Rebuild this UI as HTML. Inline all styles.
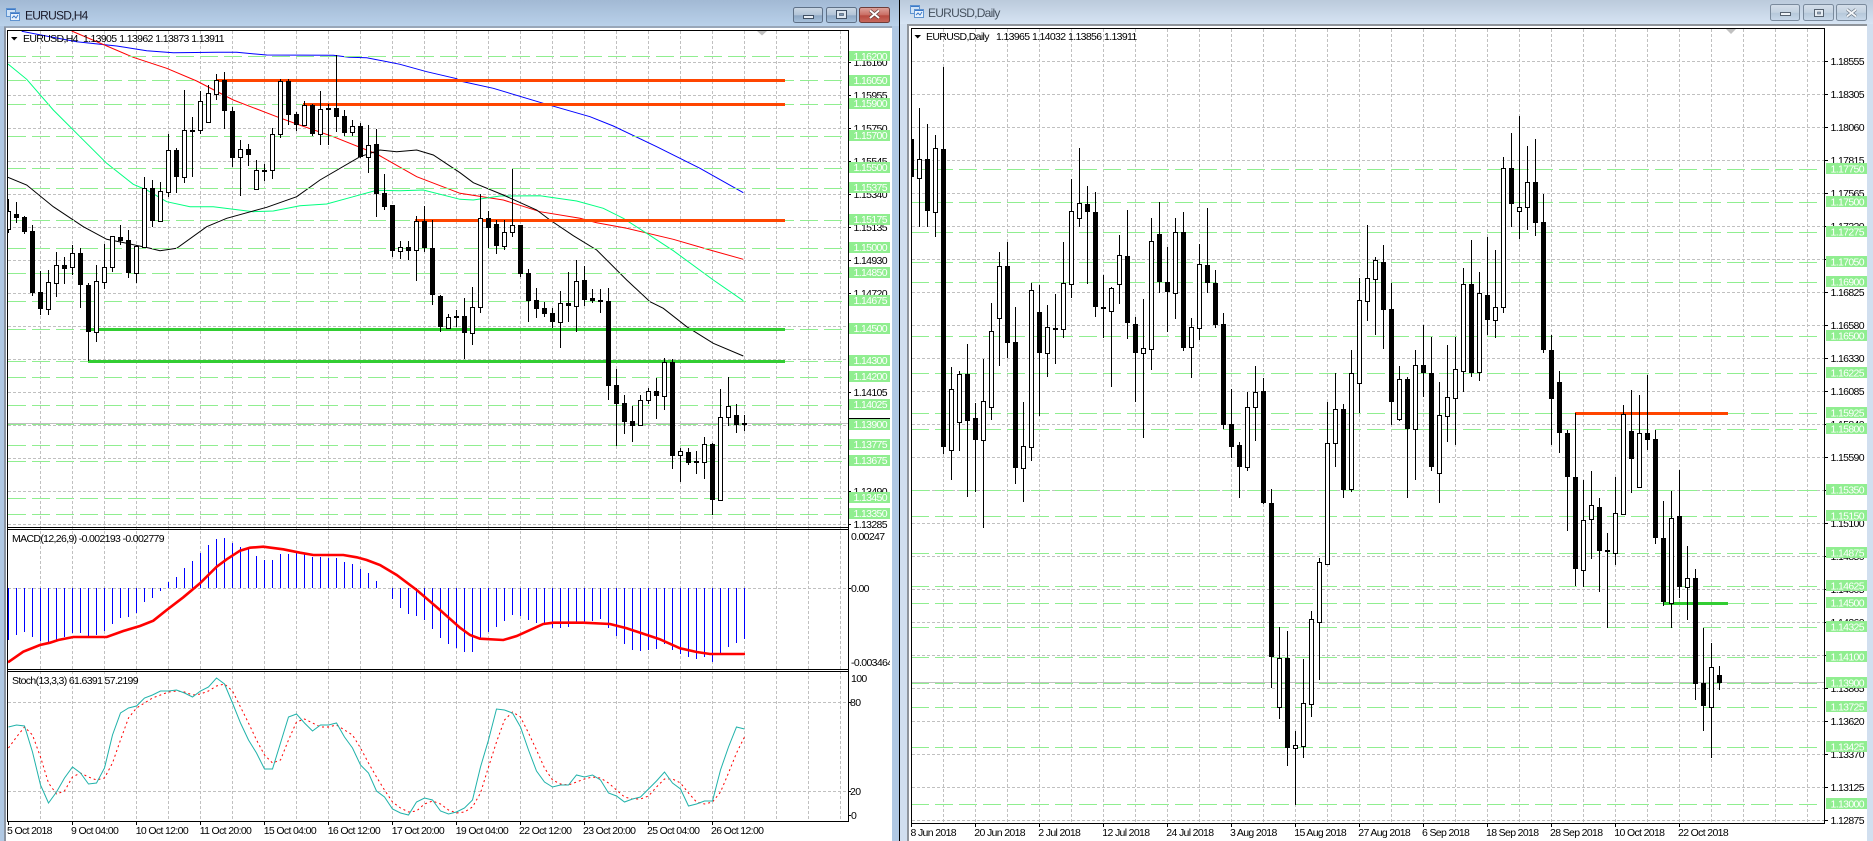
<!DOCTYPE html>
<html><head><meta charset="utf-8"><title>EURUSD</title>
<style>
html,body{margin:0;padding:0;background:#fff;width:1873px;height:841px;overflow:hidden}
svg{display:block}
text{font-family:"Liberation Sans",sans-serif;font-size:10.5px;letter-spacing:-.65px;fill:#000}
.w text{fill:#fff}
.tt{font-size:12px;letter-spacing:-.75px}
.g{stroke:#c0c0c0;stroke-dasharray:3 2;fill:none}
.d{stroke:#90ee90;stroke-dasharray:18 6;fill:none}
.lb{fill:#90ee90}
</style></head><body>
<svg width="1873" height="841" viewBox="0 0 1873 841" xmlns="http://www.w3.org/2000/svg">
<defs>
<linearGradient id="t1" x1="0" y1="0" x2="0" y2="1"><stop offset="0" stop-color="#a2b9d4"/><stop offset="1" stop-color="#b9d1ea"/></linearGradient>
<linearGradient id="t2" x1="0" y1="0" x2="0" y2="1"><stop offset="0" stop-color="#bbcadb"/><stop offset="1" stop-color="#d6e4f3"/></linearGradient>
<linearGradient id="b1" x1="0" y1="0" x2="0" y2="1"><stop offset="0" stop-color="#ccd8e5"/><stop offset=".5" stop-color="#b2c4d8"/><stop offset=".55" stop-color="#8ea8c4"/><stop offset="1" stop-color="#a9c3de"/></linearGradient>
<linearGradient id="b2" x1="0" y1="0" x2="0" y2="1"><stop offset="0" stop-color="#dfa59f"/><stop offset=".5" stop-color="#c96d63"/><stop offset=".55" stop-color="#b84a40"/><stop offset="1" stop-color="#c96a5e"/></linearGradient>
<linearGradient id="b3" x1="0" y1="0" x2="0" y2="1"><stop offset="0" stop-color="#d5dfea"/><stop offset=".5" stop-color="#c4d2e1"/><stop offset=".55" stop-color="#b6c8da"/><stop offset="1" stop-color="#c9d9ea"/></linearGradient>
<clipPath id="cL"><rect x="8" y="31" width="840" height="790"/></clipPath>
<clipPath id="cR"><rect x="912" y="29" width="912" height="794"/></clipPath>
<clipPath id="cA"><rect x="849" y="530" width="41" height="140"/></clipPath>
</defs>

<!-- left window chrome -->
<rect x="0" y="0" width="899" height="841" fill="#b0c8e3"/>
<rect x="0" y="0" width="899" height="26" fill="url(#t1)"/>
<rect x="4" y="26" width="888" height="2" fill="#98a7b9"/>
<rect x="4" y="27" width="2" height="814" fill="#8a94a2"/>
<rect x="6" y="28" width="886" height="813" fill="#fff"/>
<rect x="899" y="0" width="1" height="841" fill="#000"/>
<!-- right window chrome -->
<rect x="900" y="0" width="973" height="841" fill="#d1dfef"/>
<rect x="900" y="0" width="973" height="24" fill="url(#t2)"/>
<rect x="907" y="24" width="960" height="2" fill="#8f959c"/>
<rect x="907" y="26" width="2" height="815" fill="#8f959c"/>
<rect x="909" y="26" width="958" height="815" fill="#fff"/>

<!-- icons -->
<g>
<rect x="6.5" y="8.5" width="9" height="8" fill="#cfe2f6" stroke="#5f93d0"/><rect x="10.5" y="12.5" width="9" height="8" fill="#e8f2fc" stroke="#5f93d0"/><path d="M7 9.5h8M11 13.5h8" stroke="#3b78c8"/><path d="M12 18l2-2 2 2 2-3" stroke="#3b78c8" fill="none"/>
<rect x="910.5" y="5.5" width="9" height="8" fill="#cfe2f6" stroke="#5f93d0"/><rect x="914.5" y="9.5" width="9" height="8" fill="#e8f2fc" stroke="#5f93d0"/><path d="M911 6.5h8M915 10.5h8" stroke="#3b78c8"/><path d="M916 15l2-2 2 2 2-3" stroke="#3b78c8" fill="none"/>
</g>
<text class="tt" x="25" y="19.5" fill="#1a1a2a" style="fill:#1a1a2a">EURUSD,H4</text>
<text class="tt" x="928" y="17" style="fill:#46525f">EURUSD,Daily</text>

<!-- buttons left -->
<rect x="793.5" y="7.5" width="29" height="15" rx="2" fill="url(#b1)" stroke="#5f7187"/>
<rect x="826.5" y="7.5" width="30" height="15" rx="2" fill="url(#b1)" stroke="#5f7187"/>
<rect x="859.5" y="7.5" width="30" height="15" rx="2" fill="url(#b2)" stroke="#6e3d3a"/>
<rect x="803.5" y="15.5" width="10" height="3" fill="#e8eef5" stroke="#3f4f63"/>
<rect x="836.5" y="10.5" width="10" height="8" fill="#dfe7f0" stroke="#3f4f63"/><rect x="839.5" y="13.5" width="4" height="2" fill="#7f99b6" stroke="#3f4f63" stroke-width=".6"/>
<path d="M870 10.5l9 7.5M879 10.5l-9 7.5" stroke="#5a3835" stroke-width="3.4"/><path d="M870 10.5l9 7.5M879 10.5l-9 7.5" stroke="#fff" stroke-width="2"/>
<!-- buttons right -->
<rect x="1770.5" y="4.5" width="29" height="16" rx="2" fill="url(#b3)" stroke="#7a8a9c"/>
<rect x="1803.5" y="4.5" width="30" height="16" rx="2" fill="url(#b3)" stroke="#7a8a9c"/>
<rect x="1836.5" y="4.5" width="30" height="16" rx="2" fill="url(#b3)" stroke="#7a8a9c"/>
<rect x="1780.5" y="12.5" width="10" height="3" fill="#eef3f8" stroke="#55616f"/>
<rect x="1814.5" y="9.5" width="9" height="7" fill="#e6edf4" stroke="#55616f"/><rect x="1817.5" y="12" width="3" height="2" fill="#9cb0c6" stroke="#55616f" stroke-width=".6"/>
<path d="M1847 9.5l9 7M1856 9.5l-9 7" stroke="#6a7582" stroke-width="3.2"/><path d="M1847 9.5l9 7M1856 9.5l-9 7" stroke="#f4f7fa" stroke-width="1.8"/>

<!-- LEFT grid -->
<path class="g" d="M8 62.5H848M8 95.5H848M8 128.5H848M8 161.5H848M8 194.5H848M8 227.5H848M8 260.5H848M8 293.5H848M8 326.5H848M8 359.5H848M8 392.5H848M8 425.5H848M8 458.5H848M8 491.5H848M8 524.5H848M8 588.5H848M8 702.5H848M8 791.5H848"/>
<path class="g" d="M40.5 31V821M72.5 31V821M104.5 31V821M136.5 31V821M168.5 31V821M200.5 31V821M232.5 31V821M264.5 31V821M296.5 31V821M328.5 31V821M360.5 31V821M392.5 31V821M424.5 31V821M456.5 31V821M488.5 31V821M520.5 31V821M552.5 31V821M584.5 31V821M616.5 31V821M648.5 31V821M680.5 31V821M712.5 31V821M744.5 31V821M776.5 31V821M808.5 31V821M840.5 31V821"/>

<g clip-path="url(#cL)" fill="none">
<!-- MAs -->
<path stroke="#00f" d="M21.7 31.3 50 36.7 76.7 41.7 116.7 46 146.7 50.7 173.3 52.7 216.7 52.3 236.7 52.3 266.7 55 333.3 55.3 349 57.3 366.7 57.7 400 64.3 426.7 71.7 456.7 78.7 460 81 493.3 88.3 543.3 103.3 590 116.7 613.3 126 656.7 146.7 700 168.3 743.3 192.7"/>
<path stroke="#f00" d="M71.7 31 133.3 57.3 166.7 68.3 196.7 81 233.3 100 276.7 116.7 296.7 124 333.3 136.7 376.7 154 416.7 176.7 460 193.3 503.3 200 540 211.7 580 218.3 596.7 222.7 626.7 228.3 673.3 239.3 710 250 743.3 259.3"/>
<path stroke="#00ff7f" d="M8 64 26.7 79.3 53.3 110 80 136.7 106.7 163.3 133.3 184.3 146.7 190 166.7 201.7 190 206.7 213.3 206.7 253.3 211.7 273.3 211 300 205.7 326.7 204 353.3 196.7 376.7 190.3 400 190.7 423.3 190 460 199.3 473.3 200 500 196 540 195.7 576.7 201 603.3 208.3 623.3 218.3 646.7 233.3 673.3 250.7 713.3 280 743.3 300.7"/>
<path stroke="#000" d="M8 177.3 26.7 185 53.3 206.7 83.3 226.7 106.7 239.3 126.7 243.3 150 248.3 160 250.7 176.7 248.3 206.7 226.7 226.7 218.3 266.7 207.3 296.7 196.7 320 180 360 156.7 380 150 396.7 151.7 416.7 150 433.3 155 460 172.7 473.3 182.7 503.3 195 536.7 210 550 220 573.3 235.7 596.7 250 626.7 280 650 301.7 663.3 308.3 686.7 326.7 713.3 343.3 743.3 356"/>
<!-- level dashes -->
<path class="d" d="M8 56.5H842M8 80.5H842M8 104.5H842M8 136.5H842M8 168.5H842M8 188.5H842M8 220.5H842M8 248.5H842M8 273.5H842M8 301.5H842M8 329.5H842M8 361.5H842M8 377.5H842M8 405.5H842M8 424.5H842M8 445.5H842M8 461.5H842M8 498.5H842M8 514.5H842"/>
<path stroke="#c0c0c0" d="M8 423.5H848"/>
<!-- thick objects -->
<path stroke="#ff4500" stroke-width="3" d="M217 80.5H785M303 104.5H785M415 220.5H785"/>
<path stroke="#32cd32" stroke-width="3" d="M91 329.5H785M88 361.5H785"/>
<!-- candles -->
<path stroke="#000" d="M8.5 199V233M16.5 202V223M24.5 216V234M32.5 225V296M40.5 271V315M48.5 270V315M56.5 252V297M64.5 257V284M72.5 245V275M80.5 248V308M88.5 283V361M96.5 265V342M104.5 244V289M112.5 236V272M120.5 225V245M128.5 230V278M136.5 245V283M144.5 177V247M152.5 180V227M160.5 182V222M168.5 134V197M176.5 148V193M184.5 90V183M192.5 117V177M200.5 91V134M208.5 85V123M216.5 74V100M224.5 72V129M232.5 107V167M240.5 140V196M248.5 144V166M256.5 160V190M264.5 164V181M272.5 128V179M280.5 79V138M288.5 79V125M296.5 112V131M304.5 101V125M312.5 104V136M320.5 91V145M328.5 104V145M336.5 55V132M344.5 110V136M352.5 120V136M360.5 123V158M368.5 125V173M376.5 129V217M384.5 174V210M392.5 205V257M400.5 241V259M408.5 241V260M416.5 216V281M424.5 206V252M432.5 220V305M440.5 295V332M448.5 314V329M456.5 310V327M464.5 298V359M472.5 287V345M480.5 194V313M488.5 211V248M496.5 220V254M504.5 220V250M512.5 169V237M520.5 225V277M528.5 269V322M536.5 288V318M544.5 302V317M552.5 308V328M560.5 291V348M568.5 272V322M576.5 260V332M584.5 266V306M592.5 289V303M600.5 289V313M608.5 288V400M616.5 369V446M624.5 395V434M632.5 406V442M640.5 395V426M648.5 388V404M656.5 378V419M664.5 358V410M672.5 359V469M680.5 448V482M688.5 448V465M696.5 451V474M704.5 437V479M712.5 443V515M720.5 389V500M728.5 377V426M736.5 404V433M744.5 415V431"/>
<path stroke="#000" stroke-width="5" d="M16.5 214V218M24.5 217V232M32.5 231V293M40.5 292V309M64.5 265V269M80.5 253V285M88.5 285V332M120.5 237V241M128.5 240V273M152.5 188V221M176.5 150V177M192.5 130V132M224.5 80V111M232.5 111V158M248.5 149V155M264.5 170V172M288.5 81V115M296.5 114V125M312.5 105V134M328.5 108V110M336.5 108V117M344.5 116V133M360.5 126V157M376.5 144V194M384.5 193V207M392.5 205V251M408.5 247V251M424.5 221V248M432.5 248V295M440.5 296V327M456.5 316V318M464.5 316V333M488.5 218V228M496.5 224V246M520.5 225V274M528.5 273V301M536.5 300V309M544.5 308V314M552.5 313V322M568.5 303V306M584.5 280V300M592.5 298V301M600.5 300V302M608.5 301V386M616.5 385V404M624.5 403V422M632.5 421V426M656.5 391V396M672.5 362V456M688.5 452V463M696.5 461V463M712.5 444V500M736.5 415V425M744.5 423V425"/>
<path stroke="#000" fill="#fff" d="M6.5 211.5h4v18h-4zM46.5 282.5h4v27h-4zM54.5 265.5h4v18h-4zM70.5 253.5h4v14h-4zM94.5 281.5h4v51h-4zM102.5 267.5h4v15h-4zM110.5 236.5h4v31h-4zM134.5 246.5h4v27h-4zM142.5 188.5h4v59h-4zM158.5 191.5h4v30h-4zM166.5 150.5h4v42h-4zM182.5 130.5h4v47h-4zM198.5 101.5h4v29h-4zM206.5 93.5h4v29h-4zM214.5 80.5h4v14h-4zM238.5 149.5h4v8h-4zM254.5 170.5h4v19h-4zM270.5 134.5h4v36h-4zM278.5 81.5h4v53h-4zM302.5 105.5h4v20h-4zM318.5 109.5h4v25h-4zM350.5 126.5h4v6h-4zM366.5 145.5h4v12h-4zM398.5 247.5h4v4h-4zM414.5 221.5h4v29h-4zM446.5 317.5h4v11h-4zM470.5 307.5h4v26h-4zM478.5 218.5h4v89h-4zM502.5 232.5h4v14h-4zM510.5 225.5h4v7h-4zM558.5 303.5h4v19h-4zM574.5 281.5h4v25h-4zM638.5 400.5h4v25h-4zM646.5 391.5h4v9h-4zM662.5 362.5h4v34h-4zM678.5 451.5h4v4h-4zM702.5 444.5h4v18h-4zM718.5 417.5h4v83h-4zM726.5 406.5h4v11h-4z"/>
<!-- MACD -->
<path stroke="#00f" d="M8.5 588V640M16.5 588V635M24.5 588V632M32.5 588V637M40.5 588V641M48.5 588V643M56.5 588V640M64.5 588V637M72.5 588V633M80.5 588V633M88.5 588V636M96.5 588V635M104.5 588V631M112.5 588V624M120.5 588V618M128.5 588V617M136.5 588V613M144.5 588V602M152.5 588V598M160.5 588V591M168.5 588V582M176.5 588V577M184.5 588V568M192.5 588V561M200.5 588V553M208.5 588V545M216.5 588V539M224.5 588V538M232.5 588V543M240.5 588V547M248.5 588V549M256.5 588V556M264.5 588V560M272.5 588V560M280.5 588V554M288.5 588V554M296.5 588V553M304.5 588V553M312.5 588V557M320.5 588V557M328.5 588V558M336.5 588V558M344.5 588V562M352.5 588V564M360.5 588V569M368.5 588V573M376.5 588V581M392.5 588V599M400.5 588V608M408.5 588V614M416.5 588V616M424.5 588V620M432.5 588V629M440.5 588V638M448.5 588V644M456.5 588V648M464.5 588V652M472.5 588V652M480.5 588V639M488.5 588V632M496.5 588V627M504.5 588V621M512.5 588V615M520.5 588V616M528.5 588V620M536.5 588V623M544.5 588V623M552.5 588V628M560.5 588V628M568.5 588V627M576.5 588V623M584.5 588V623M592.5 588V621M600.5 588V619M608.5 588V628M616.5 588V636M624.5 588V644M632.5 588V650M640.5 588V651M648.5 588V650M656.5 588V649M664.5 588V644M672.5 588V650M680.5 588V654M688.5 588V657M696.5 588V659M704.5 588V657M712.5 588V662M720.5 588V654M728.5 588V647M736.5 588V643M744.5 588V639"/>
<path stroke="#f00" stroke-width="2.6" d="M8 662.3 23.3 651.7 40 645 50 642.7 58.3 640 73.3 637 106.7 637 123.3 631 140 626 153.3 620.7 166.7 610 183.3 597.3 200 583.3 216.7 566.7 226.7 559.3 240 550.7 250 547.7 263.3 546.7 283.3 549.3 300 552.7 313.3 555 343.3 555 356.7 557.3 366.7 560 380 565 396.7 575 416.7 590 440 610 460 627.7 470 635 480 638.7 503.3 640 516.7 636 543.3 624 553.3 622.7 583.3 622.7 610 624 626.7 628.3 660 639.3 680 648.3 696.7 652 710 654 745 654"/>
<!-- Stoch -->
<path stroke="#f00" stroke-dasharray="2 3" d="M8.5 748 16.5 737 24.5 727 32.5 735 40.5 757 48.5 783 56.5 794 64.5 791 72.5 777 80.5 773 88.5 777 96.5 780 104.5 778 112.5 763 120.5 740 128.5 718 136.5 708 144.5 703 152.5 698 160.5 695 168.5 692 176.5 691 184.5 692 192.5 695 200.5 694 208.5 691 216.5 686 224.5 684 232.5 691 240.5 707 248.5 723 256.5 740 264.5 755 272.5 763 280.5 760 288.5 740 296.5 722 304.5 719 312.5 723 320.5 727 328.5 727 336.5 725 344.5 730 352.5 735 360.5 748 368.5 763 376.5 777 384.5 790 392.5 802 400.5 808 408.5 812 416.5 811 424.5 804 432.5 801 440.5 804 448.5 810 456.5 813 464.5 812 472.5 807 480.5 793 488.5 767 496.5 742 504.5 720 512.5 712 520.5 717 528.5 733 536.5 750 544.5 768 552.5 780 560.5 784 568.5 785 576.5 782 584.5 779 592.5 777 600.5 778 608.5 783 616.5 790 624.5 797 632.5 799 640.5 799 648.5 796 656.5 787 664.5 779 672.5 779 680.5 783 688.5 793 696.5 802 704.5 804 712.5 802 720.5 792 728.5 773 736.5 753 744.5 737"/>
<path stroke="#20b2aa" d="M8.5 727 16.5 725 24.5 726 32.5 752 40.5 785 48.5 803 56.5 792 64.5 778 72.5 767 80.5 773 88.5 784 96.5 783 104.5 768 112.5 735 120.5 713 128.5 708 136.5 706 144.5 698 152.5 695 160.5 691 168.5 691 176.5 690 184.5 693 192.5 697 200.5 691 208.5 687 216.5 678 224.5 684 232.5 703 240.5 723 248.5 740 256.5 753 264.5 769 272.5 769 280.5 743 288.5 717 296.5 714 304.5 723 312.5 731 320.5 725 328.5 725 336.5 723 344.5 737 352.5 748 360.5 765 368.5 773 376.5 791 384.5 797 392.5 809 400.5 813 408.5 815 416.5 802 424.5 798 432.5 800 440.5 811 448.5 814 456.5 812 464.5 808 472.5 800 480.5 767 488.5 740 496.5 709 504.5 710 512.5 713 520.5 727 528.5 750 536.5 771 544.5 782 552.5 787 560.5 785 568.5 785 576.5 775 584.5 777 592.5 775 600.5 780 608.5 793 616.5 796 624.5 802 632.5 799 640.5 797 648.5 789 656.5 781 664.5 772 672.5 783 680.5 789 688.5 806 696.5 804 704.5 801 712.5 801 720.5 770 728.5 747 736.5 727 744.5 729"/>
</g>

<!-- left pane borders -->
<path stroke="#000" fill="none" d="M7.5 30V822M7 30.5H849M848.5 30V822M7 527.5H849M7 529.5H849M7 669.5H849M7 671.5H849M7 821.5H849"/>
<path stroke="#000" d="M848 62.5h3M848 95.5h3M848 128.5h3M848 161.5h3M848 194.5h3M848 227.5h3M848 260.5h3M848 293.5h3M848 326.5h3M848 359.5h3M848 392.5h3M848 425.5h3M848 458.5h3M848 491.5h3M848 524.5h3M848 588.5h3M848 702.5h3M848 791.5h3M848 815.5h3M8.5 821v4M72.5 821v4M136.5 821v4M200.5 821v4M264.5 821v4M328.5 821v4M392.5 821v4M456.5 821v4M520.5 821v4M584.5 821v4M648.5 821v4M712.5 821v4"/>
<polygon points="757,31 767,31 762,35.5" fill="#c0c0c0"/>
<polygon points="11,37 17.5,37 14.2,40.5" fill="#000"/>
<text x="23" y="42">EURUSD,H4</text><text x="83" y="42">1.13905</text><text x="119.3" y="42">1.13962</text><text x="155.3" y="42">1.13873</text><text x="191.3" y="42">1.13911</text>
<text x="12" y="542">MACD(12,26,9) -0.002193 -0.002779</text>
<text x="12" y="684">Stoch(13,3,3) 61.6391 57.2199</text>

<!-- left price axis -->
<g>
<text x="853.5" y="66">1.16160</text><text x="853.5" y="99">1.15955</text><text x="853.5" y="132">1.15750</text><text x="853.5" y="165">1.15545</text><text x="853.5" y="198">1.15340</text><text x="853.5" y="231">1.15135</text><text x="853.5" y="264">1.14930</text><text x="853.5" y="297">1.14720</text><text x="853.5" y="396">1.14105</text><text x="853.5" y="495">1.13490</text><text x="853.5" y="528">1.13285</text>
</g>
<rect x="849" y="418" width="41" height="1" fill="#000"/>
<g class="lb">
<rect x="849" y="51" width="41" height="10"/><rect x="849" y="75" width="41" height="11"/><rect x="849" y="98" width="41" height="11"/><rect x="849" y="130" width="41" height="11"/><rect x="849" y="162" width="41" height="11"/><rect x="849" y="182" width="41" height="11"/><rect x="849" y="214" width="41" height="11"/><rect x="849" y="242" width="41" height="11"/><rect x="849" y="267" width="41" height="11"/><rect x="849" y="295" width="41" height="11"/><rect x="849" y="323" width="41" height="11"/><rect x="849" y="355" width="41" height="11"/><rect x="849" y="371" width="41" height="11"/><rect x="849" y="399" width="41" height="11"/><rect x="849" y="419" width="41" height="11"/><rect x="849" y="439" width="41" height="11"/><rect x="849" y="455" width="41" height="11"/><rect x="849" y="492" width="41" height="11"/><rect x="849" y="508" width="41" height="11"/>
</g>
<g class="w">
<text x="853.5" y="60">1.16200</text><text x="853.5" y="84">1.16050</text><text x="853.5" y="107">1.15900</text><text x="853.5" y="139">1.15700</text><text x="853.5" y="171">1.15500</text><text x="853.5" y="191">1.15375</text><text x="853.5" y="223">1.15175</text><text x="853.5" y="251">1.15000</text><text x="853.5" y="276">1.14850</text><text x="853.5" y="304">1.14675</text><text x="853.5" y="332">1.14500</text><text x="853.5" y="364">1.14300</text><text x="853.5" y="380">1.14200</text><text x="853.5" y="408">1.14025</text><text x="853.5" y="428">1.13900</text><text x="853.5" y="448">1.13775</text><text x="853.5" y="464">1.13675</text><text x="853.5" y="501">1.13450</text><text x="853.5" y="517">1.13350</text>
</g>
<text x="851" y="540">0.00247</text>
<text x="851" y="592">0.00</text>
<g clip-path="url(#cA)"><text x="851" y="666">-0.003464</text></g>
<text x="851" y="682">100</text><text x="850" y="706">80</text><text x="850" y="795">20</text><text x="851" y="819">0</text>
<text x="7" y="834">5 Oct 2018</text><text x="71" y="834">9 Oct 04:00</text><text x="135.7" y="834">10 Oct 12:00</text><text x="199.7" y="834">11 Oct 20:00</text><text x="263.7" y="834">15 Oct 04:00</text><text x="327.7" y="834">16 Oct 12:00</text><text x="391.7" y="834">17 Oct 20:00</text><text x="455.7" y="834">19 Oct 04:00</text><text x="519" y="834">22 Oct 12:00</text><text x="583" y="834">23 Oct 20:00</text><text x="647" y="834">25 Oct 04:00</text><text x="711" y="834">26 Oct 12:00</text>

<!-- RIGHT grid -->
<path class="g" d="M912 61.5H1825M912 94.5H1825M912 127.5H1825M912 160.5H1825M912 193.5H1825M912 226.5H1825M912 259.5H1825M912 292.5H1825M912 325.5H1825M912 358.5H1825M912 391.5H1825M912 424.5H1825M912 457.5H1825M912 490.5H1825M912 523.5H1825M912 556.5H1825M912 589.5H1825M912 622.5H1825M912 655.5H1825M912 688.5H1825M912 721.5H1825M912 754.5H1825M912 787.5H1825M912 820.5H1825"/>
<path class="g" d="M943.5 29V823M975.5 29V823M1007.5 29V823M1039.5 29V823M1071.5 29V823M1103.5 29V823M1135.5 29V823M1167.5 29V823M1199.5 29V823M1231.5 29V823M1263.5 29V823M1295.5 29V823M1327.5 29V823M1359.5 29V823M1391.5 29V823M1423.5 29V823M1455.5 29V823M1487.5 29V823M1519.5 29V823M1551.5 29V823M1583.5 29V823M1615.5 29V823M1647.5 29V823M1679.5 29V823M1711.5 29V823M1743.5 29V823M1775.5 29V823M1807.5 29V823"/>
<g clip-path="url(#cR)" fill="none">
<path class="d" d="M911 169.5H1818M911 202.5H1818M911 232.5H1818M911 262.5H1818M911 282.5H1818M911 336.5H1818M911 373.5H1818M911 413.5H1818M911 429.5H1818M911 490.5H1818M911 516.5H1818M911 553.5H1818M911 586.5H1818M911 603.5H1818M911 627.5H1818M911 657.5H1818M911 683.5H1818M911 707.5H1818M911 747.5H1818M911 804.5H1818"/>
<path stroke="#c0c0c0" d="M912 682.5H1825"/>
<path stroke="#ff4500" stroke-width="3" d="M1575 413.5H1728"/>
<path stroke="#32cd32" stroke-width="3" d="M1663 603.5H1728"/>
<path stroke="#000" d="M911.5 122V235M919.5 108V227M927.5 124V227M935.5 135V237M943.5 67V454M951.5 367V480M959.5 371V451M967.5 344V497M975.5 403V492M983.5 359V528M991.5 303V420M999.5 252V366M1007.5 242V358M1015.5 307V484M1023.5 402V502M1031.5 283V461M1039.5 285V416M1047.5 305V377M1055.5 294V364M1063.5 242V338M1071.5 179V298M1079.5 148V227M1087.5 186V284M1095.5 192V317M1103.5 275V338M1111.5 287V387M1119.5 235V304M1127.5 210V339M1135.5 317V402M1143.5 299V438M1151.5 218V370M1159.5 202V293M1167.5 247V332M1175.5 218V319M1183.5 212V351M1191.5 318V378M1199.5 244V340M1207.5 208V293M1215.5 270V328M1223.5 313V429M1231.5 389V458M1239.5 442V498M1247.5 392V471M1255.5 366V441M1263.5 378V504M1271.5 489V688M1279.5 627V719M1287.5 631V766M1295.5 731V805M1303.5 659V758M1311.5 611V717M1319.5 558V680M1327.5 402V565M1335.5 373V467M1343.5 404V498M1351.5 350V492M1359.5 278V413M1367.5 225V321M1375.5 257V335M1383.5 245V349M1391.5 283V425M1399.5 366V421M1407.5 377V498M1415.5 350V480M1423.5 325V397M1431.5 337V471M1439.5 382V503M1447.5 345V442M1455.5 337V445M1463.5 268V392M1471.5 240V377M1479.5 272V381M1487.5 237V335M1495.5 250V338M1503.5 157V313M1511.5 133V227M1519.5 116V239M1527.5 146V230M1535.5 139V236M1543.5 194V353M1551.5 335V445M1559.5 371V453M1567.5 430V531M1575.5 413V586M1583.5 480V587M1591.5 471V559M1599.5 498V592M1607.5 533V628M1615.5 477V565M1623.5 405V515M1631.5 390V493M1639.5 395V488M1647.5 375V450M1655.5 430V544M1663.5 501V606M1671.5 491V628M1679.5 470V598M1687.5 546V620M1695.5 569V700M1703.5 628V731M1711.5 643V758M1719.5 666V690"/>
<path stroke="#000" stroke-width="5" d="M911.5 139V177M927.5 159V211M943.5 149V447M967.5 374V421M975.5 418V440M1007.5 266V343M1015.5 342V468M1039.5 312V353M1055.5 328V330M1087.5 204V212M1095.5 212V307M1103.5 307V309M1127.5 256V323M1135.5 324V353M1159.5 234V282M1167.5 282V292M1183.5 232V348M1207.5 265V283M1215.5 283V325M1223.5 324V425M1231.5 424V447M1239.5 445V467M1263.5 391V503M1271.5 503V657M1287.5 658V748M1343.5 409V490M1383.5 262V310M1391.5 309V402M1407.5 379V429M1423.5 365V373M1431.5 373V467M1471.5 284V373M1487.5 295V320M1511.5 168V204M1535.5 182V223M1543.5 222V350M1551.5 350V399M1559.5 382V433M1567.5 433V477M1575.5 477V569M1599.5 507V551M1607.5 550V552M1631.5 431V459M1647.5 433V440M1655.5 439V538M1663.5 538V602M1679.5 516V587M1695.5 578V684M1703.5 683V706M1719.5 675V683"/>
<path stroke="#000" fill="#fff" d="M917.5 159.5h4v19h-4zM933.5 148.5h4v64h-4zM949.5 389.5h4v61h-4zM957.5 374.5h4v48h-4zM981.5 401.5h4v39h-4zM989.5 331.5h4v76h-4zM997.5 266.5h4v52h-4zM1021.5 446.5h4v22h-4zM1029.5 290.5h4v157h-4zM1045.5 327.5h4v26h-4zM1061.5 283.5h4v46h-4zM1069.5 211.5h4v73h-4zM1077.5 203.5h4v15h-4zM1109.5 288.5h4v23h-4zM1117.5 255.5h4v29h-4zM1141.5 348.5h4v5h-4zM1149.5 241.5h4v108h-4zM1173.5 232.5h4v61h-4zM1189.5 327.5h4v20h-4zM1197.5 264.5h4v64h-4zM1245.5 407.5h4v60h-4zM1253.5 392.5h4v15h-4zM1277.5 658.5h4v49h-4zM1293.5 745.5h4v3h-4zM1301.5 703.5h4v43h-4zM1309.5 619.5h4v85h-4zM1317.5 562.5h4v60h-4zM1325.5 443.5h4v121h-4zM1333.5 409.5h4v34h-4zM1349.5 373.5h4v116h-4zM1357.5 300.5h4v83h-4zM1365.5 278.5h4v23h-4zM1373.5 260.5h4v19h-4zM1397.5 379.5h4v40h-4zM1413.5 365.5h4v64h-4zM1437.5 415.5h4v58h-4zM1445.5 397.5h4v19h-4zM1453.5 369.5h4v29h-4zM1461.5 284.5h4v87h-4zM1477.5 293.5h4v79h-4zM1493.5 307.5h4v13h-4zM1501.5 168.5h4v139h-4zM1517.5 207.5h4v4h-4zM1525.5 182.5h4v25h-4zM1581.5 520.5h4v50h-4zM1589.5 505.5h4v14h-4zM1613.5 513.5h4v40h-4zM1621.5 414.5h4v100h-4zM1637.5 433.5h4v54h-4zM1669.5 518.5h4v85h-4zM1685.5 578.5h4v9h-4zM1709.5 667.5h4v40h-4z"/>
</g>
<path stroke="#000" fill="none" d="M911.5 28V824M911 28.5H1825M1824.5 28V824M911 823.5H1825"/>
<path stroke="#000" d="M1825 61.5h3M1825 94.5h3M1825 127.5h3M1825 160.5h3M1825 193.5h3M1825 226.5h3M1825 259.5h3M1825 292.5h3M1825 325.5h3M1825 358.5h3M1825 391.5h3M1825 424.5h3M1825 457.5h3M1825 490.5h3M1825 523.5h3M1825 556.5h3M1825 589.5h3M1825 622.5h3M1825 655.5h3M1825 688.5h3M1825 721.5h3M1825 754.5h3M1825 787.5h3M1825 820.5h3M911.5 823v4M975.5 823v4M1039.5 823v4M1103.5 823v4M1167.5 823v4M1231.5 823v4M1295.5 823v4M1359.5 823v4M1423.5 823v4M1487.5 823v4M1551.5 823v4M1615.5 823v4M1679.5 823v4"/>
<polygon points="1726,29 1736,29 1731,34" fill="#c0c0c0"/>
<polygon points="914.5,35 921,35 917.7,38.5" fill="#000"/>
<text x="926" y="40">EURUSD,Daily</text><text x="996" y="40">1.13965</text><text x="1032" y="40">1.14032</text><text x="1068" y="40">1.13856</text><text x="1104" y="40">1.13911</text>

<!-- right price axis -->
<g>
<text x="1830.5" y="65">1.18555</text><text x="1830.5" y="98">1.18305</text><text x="1830.5" y="131">1.18060</text><text x="1830.5" y="164">1.17815</text><text x="1830.5" y="197">1.17565</text><text x="1830.5" y="230">1.17320</text><text x="1830.5" y="296">1.16825</text><text x="1830.5" y="329">1.16580</text><text x="1830.5" y="362">1.16330</text><text x="1830.5" y="395">1.16085</text><text x="1830.5" y="428">1.15840</text><text x="1830.5" y="461">1.15590</text><text x="1830.5" y="527">1.15100</text><text x="1830.5" y="560">1.14850</text><text x="1830.5" y="593">1.14605</text><text x="1830.5" y="626">1.14360</text><text x="1830.5" y="692">1.13865</text><text x="1830.5" y="725">1.13620</text><text x="1830.5" y="758">1.13370</text><text x="1830.5" y="791">1.13125</text><text x="1830.5" y="824">1.12875</text>
</g>
<g class="lb">
<rect x="1826" y="163" width="41" height="11"/><rect x="1826" y="196" width="41" height="11"/><rect x="1826" y="226" width="41" height="11"/><rect x="1826" y="256" width="41" height="11"/><rect x="1826" y="276" width="41" height="11"/><rect x="1826" y="330" width="41" height="11"/><rect x="1826" y="367" width="41" height="11"/><rect x="1826" y="407" width="41" height="11"/><rect x="1826" y="423" width="41" height="11"/><rect x="1826" y="484" width="41" height="11"/><rect x="1826" y="510" width="41" height="11"/><rect x="1826" y="547" width="41" height="11"/><rect x="1826" y="580" width="41" height="11"/><rect x="1826" y="597" width="41" height="11"/><rect x="1826" y="621" width="41" height="11"/><rect x="1826" y="651" width="41" height="11"/><rect x="1826" y="677" width="41" height="11"/><rect x="1826" y="701" width="41" height="11"/><rect x="1826" y="741" width="41" height="11"/><rect x="1826" y="798" width="41" height="11"/>
</g>
<g class="w">
<text x="1830.5" y="172.5">1.17750</text><text x="1830.5" y="205.5">1.17500</text><text x="1830.5" y="235.5">1.17275</text><text x="1830.5" y="265.5">1.17050</text><text x="1830.5" y="285.5">1.16900</text><text x="1830.5" y="339.5">1.16500</text><text x="1830.5" y="376.5">1.16225</text><text x="1830.5" y="416.5">1.15925</text><text x="1830.5" y="432.5">1.15800</text><text x="1830.5" y="493.5">1.15350</text><text x="1830.5" y="519.5">1.15150</text><text x="1830.5" y="556.5">1.14875</text><text x="1830.5" y="589.5">1.14625</text><text x="1830.5" y="606.5">1.14500</text><text x="1830.5" y="630.5">1.14325</text><text x="1830.5" y="660.5">1.14100</text><text x="1830.5" y="686.5">1.13900</text><text x="1830.5" y="710.5">1.13725</text><text x="1830.5" y="750.5">1.13425</text><text x="1830.5" y="807.5">1.13000</text>
</g>
<text x="910.5" y="836">8 Jun 2018</text><text x="974.3" y="836">20 Jun 2018</text><text x="1038.3" y="836">2 Jul 2018</text><text x="1102.3" y="836">12 Jul 2018</text><text x="1166.3" y="836">24 Jul 2018</text><text x="1230" y="836">3 Aug 2018</text><text x="1294.3" y="836">15 Aug 2018</text><text x="1358.3" y="836">27 Aug 2018</text><text x="1422" y="836">6 Sep 2018</text><text x="1486" y="836">18 Sep 2018</text><text x="1550" y="836">28 Sep 2018</text><text x="1614.3" y="836">10 Oct 2018</text><text x="1678" y="836">22 Oct 2018</text>
</svg>
</body></html>
